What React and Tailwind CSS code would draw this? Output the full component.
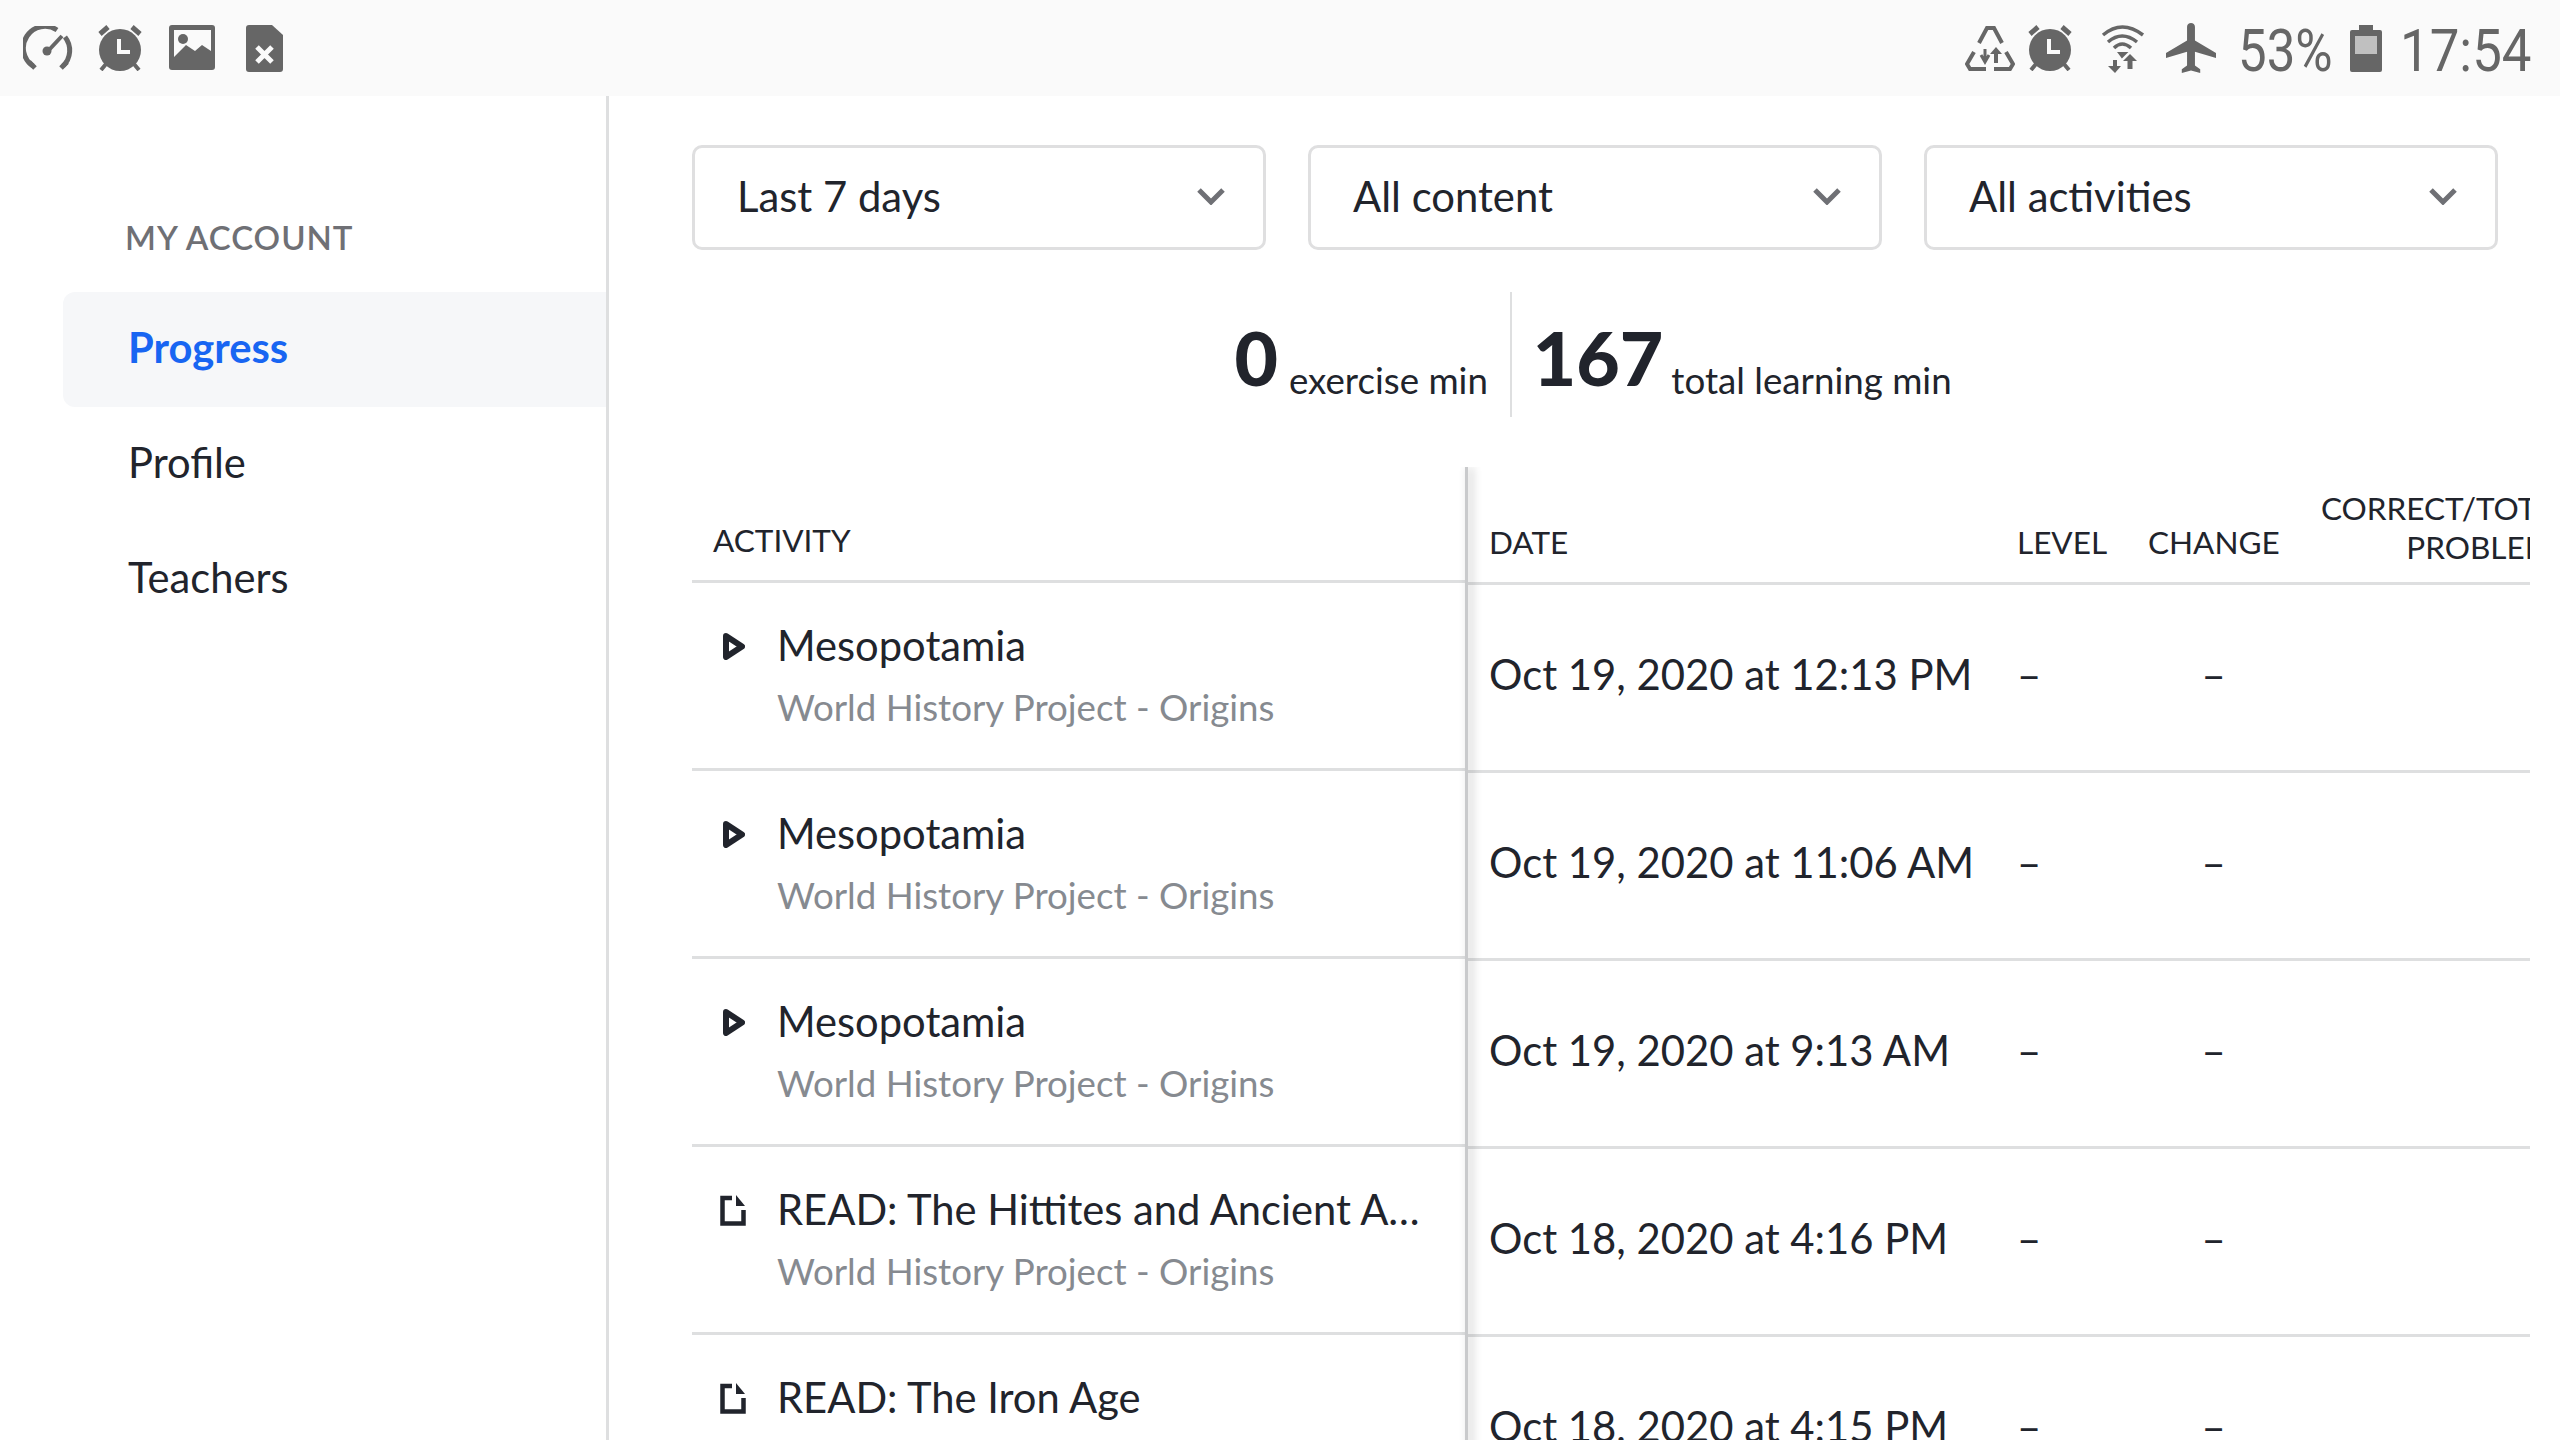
import React from "react";

const rows = [
  { type: "video", title: "Mesopotamia", date: "Oct 19, 2020 at 12:13 PM" },
  { type: "video", title: "Mesopotamia", date: "Oct 19, 2020 at 11:06 AM" },
  { type: "video", title: "Mesopotamia", date: "Oct 19, 2020 at 9:13 AM" },
  { type: "article", title: "READ: The Hittites and Ancient Anatolia", date: "Oct 18, 2020 at 4:16 PM" },
  { type: "article", title: "READ: The Iron Age", date: "Oct 18, 2020 at 4:15 PM" },
];

function SpeedIcon() {
  return (
    <svg width="50" height="44" viewBox="0 0 50 44" fill="none" stroke="#666" strokeWidth="5">
      <path d="M10 40 A21.5 21.5 0 0 1 34 4" />
      <path d="M42 11 A21.5 21.5 0 0 1 40 40" />
      <path d="M6 36 L12 42 M44 36 L38 42" />
      <path d="M25 25 L39 10" strokeWidth="4" />
      <circle cx="24" cy="25" r="4.5" fill="#666" stroke="none" />
    </svg>
  );
}

function AlarmIcon() {
  return (
    <svg width="46" height="46" viewBox="0 0 46 46" fill="none">
      <circle cx="23" cy="25" r="21" fill="#666" />
      <path d="M3 9 L11 2 M43 9 L35 2" stroke="#666" strokeWidth="5" />
      <path d="M9 39 L4 45 M37 39 L42 45" stroke="#666" strokeWidth="4" />
      <path d="M22 14 V27 H33" stroke="#fafafa" strokeWidth="4" />
    </svg>
  );
}

function ImageIcon() {
  return (
    <svg width="46" height="46" viewBox="0 0 46 46">
      <rect width="46" height="45" rx="3" fill="#666" />
      <path d="M5 5 H42 V26 L33 20 L26 26 L17 20 L5 32 Z" fill="#fafafa" />
      <circle cx="14" cy="14" r="5" fill="#666" />
    </svg>
  );
}

function FileXIcon() {
  return (
    <svg width="37" height="47" viewBox="0 0 37 47">
      <path d="M3 0 H26 L37 10 V44 Q37 47 34 47 H3 Q0 47 0 44 V3 Q0 0 3 0 Z" fill="#666" />
      <path d="M11 22 L26 37 M26 22 L11 37" stroke="#fafafa" strokeWidth="5" />
    </svg>
  );
}

function RecycleIcon() {
  return (
    <svg width="50" height="46" viewBox="0 0 50 46" fill="none" stroke="#666" strokeWidth="4">
      <path d="M14 18 L22 3 H29 L37 18" />
      <path d="M9 27 L2 39 L5 44 H21" />
      <path d="M41 27 L48 39 L45 44 H29" />
      <path d="M20 24 V36 M16 30 L20 37 L24 30" strokeWidth="3" />
      <path d="M31 38 V26" strokeWidth="4" />
      <path d="M25 29 L31 22 L37 29 Z" fill="#666" stroke="none" />
    </svg>
  );
}

function WifiIcon() {
  return (
    <svg width="44" height="50" viewBox="0 0 44 50" fill="none" stroke="#666" strokeWidth="3.5">
      <path d="M2 12 Q21 -4 42 12" />
      <path d="M7 19 Q21 7 36 19" />
      <path d="M13 25 Q21 17 30 25" />
      <path d="M18 30 L21 34 L25 30 Z" fill="#666" strokeWidth="2" />
      <path d="M14 37 V47" strokeWidth="4" />
      <path d="M7 43 L14 50 L20 43 Z" fill="#666" stroke="none" />
      <path d="M29 46 V36" strokeWidth="5" />
      <path d="M22 38 L29 31 L36 38 Z" fill="#666" stroke="none" />
    </svg>
  );
}

function PlaneIcon() {
  return (
    <svg width="50" height="50" viewBox="2 2 19 20" preserveAspectRatio="none" fill="#666">
      <path d="M21 16v-2l-8-5V3.5c0-.83-.67-1.5-1.5-1.5S10 2.67 10 3.5V9l-8 5v2l8-2.5V19l-2 1.5V22l3.5-1 3.5 1v-1.5L13 19v-5.5l8 2.5z" />
    </svg>
  );
}

function BatteryIcon() {
  return (
    <svg width="32" height="47" viewBox="0 0 32 47">
      <path d="M9 0 H23 V5 H30 Q32 5 32 7 V45 Q32 47 30 47 H2 Q0 47 0 45 V7 Q0 5 2 5 H9 Z" fill="#666" />
      <rect x="5" y="11" width="22" height="18" fill="#c0c0c0" />
    </svg>
  );
}

function PlayIcon() {
  return (
    <svg width="22" height="27" viewBox="0 0 22 27" fill="none" stroke="#21242c" strokeWidth="6" strokeLinejoin="round">
      <path d="M3 3 L19 13.5 L3 24 Z" />
    </svg>
  );
}

function ArticleIcon() {
  return (
    <svg className="-ml-[3px] -mt-[2px]" width="26" height="31" viewBox="0 0 26 31" fill="none">
      <path d="M12 3 H2.5 V28.5 H23.5 V15" stroke="#21242c" strokeWidth="4.5" />
      <path d="M16 0 L25 11 H16 Z" fill="#21242c" />
    </svg>
  );
}

function Chevron() {
  return (
    <svg width="28" height="17" viewBox="0 0 28 17" fill="none" stroke="#6f7075" strokeWidth="5">
      <path d="M2 2 L14 14 L26 2" />
    </svg>
  );
}

function Select({ label }) {
  return (
    <div className="flex items-center justify-between w-[574px] h-[105px] pl-[42px] pr-[38px] pb-[2px] border-[3px] border-[#dfdfe0] rounded-[10px] text-[41.8px] text-[#21242c]">
      <span>{label}</span>
      <Chevron />
    </div>
  );
}

export default function App() {
  return (
    <div className="h-[1440px] w-[2560px] overflow-hidden bg-white font-['Lato','Noto_Sans',sans-serif] text-[#21242c]">
      <div className="flex items-center justify-between h-[96px] bg-[#fafafa] pl-[23px] pr-[30px]">
        <div className="flex items-center">
          <div className="mr-[24px]"><SpeedIcon /></div>
          <div className="mr-[26px]"><AlarmIcon /></div>
          <div className="mr-[31px]"><ImageIcon /></div>
          <FileXIcon />
        </div>
        <div className="flex items-center">
          <div className="mr-[12px]"><RecycleIcon /></div>
          <div className="mr-[28px]"><AlarmIcon /></div>
          <div className="mr-[21px]"><WifiIcon /></div>
          <div className="mr-[22px]"><PlaneIcon /></div>
          <span className="w-[94px] mr-[18px] pt-[6px] origin-left scale-x-[0.85] font-['Roboto',sans-serif] text-[60px] leading-none text-[#666] whitespace-nowrap">53%</span>
          <div className="mr-[18px]"><BatteryIcon /></div>
          <span className="w-[130px] pt-[6px] origin-left scale-x-[0.88] font-['Roboto',sans-serif] text-[60px] leading-none text-[#666] whitespace-nowrap">17:54</span>
        </div>
      </div>

      <div className="flex">
        <aside className="w-[609px] h-[1344px] shrink-0 border-r-[3px] border-[#dedfe0] pl-[63px] pt-[116px]">
          <div className="pl-[62px] text-[33px] font-semibold leading-[50px] tracking-[1px] text-[#6f7075]">MY ACCOUNT</div>
          <div className="mt-[30px] flex items-center h-[115px] pl-[65px] pb-[5px] rounded-l-[12px] bg-[#f6f7f9] text-[41.7px] font-bold text-[#1865f2]">Progress</div>
          <div className="flex items-center h-[115px] pl-[65px] pb-[5px] text-[41.7px]">Profile</div>
          <div className="flex items-center h-[115px] pl-[65px] pb-[5px] text-[41.7px]">Teachers</div>
        </aside>

        <main className="w-[1921px] pl-[83px] pt-[49px]">
          <div className="flex gap-[42px]">
            <Select label="Last 7 days" />
            <Select label="All content" />
            <Select label="All activities" />
          </div>

          <div className="flex justify-center items-end h-[125px] mt-[42px] pr-[36px]">
            <div className="flex items-end pr-[22px] pb-[12px]">
              <span className="text-[75px] font-black mr-[11px] mb-[10px] leading-[75px]">0</span>
              <span className="text-[36.7px] leading-[50px]">exercise min</span>
            </div>
            <div className="w-[2px] h-[125px] bg-[#dedfe0]" />
            <div className="flex items-end pl-[21px] pb-[12px]">
              <span className="text-[75px] font-black mr-[8px] mb-[10px] leading-[75px]">167</span>
              <span className="text-[36.7px] leading-[50px]">total learning min</span>
            </div>
          </div>

          <div className="flex mt-[50px] w-[1838px] overflow-hidden">
            <div className="w-[773px] shrink-0">
              <div className="flex items-end h-[116px] pl-[21px] pb-[20px] border-b-[3px] border-[#dedfe0] text-[31.5px] leading-[40px]">ACTIVITY</div>
              {rows.map((row, i) => (
                <div key={i} className="flex h-[188px] border-b-[3px] border-[#dedfe0] pl-[31px] pt-[37px]">
                  <div className="w-[54px] shrink-0 pt-[13px]">
                    {row.type === "video" ? <PlayIcon /> : <ArticleIcon />}
                  </div>
                  <div className="min-w-0 w-[654px]">
                    <div className="truncate text-[41.7px] leading-[50px]">{row.title}</div>
                    <div className="text-[36.7px] leading-[50px] mt-[12px] text-[#868a90]">World History Project - Origins</div>
                  </div>
                </div>
              ))}
            </div>

            <div className="relative flex-1 min-w-0 pl-[3px] pt-[2px]">
              <div className="absolute left-0 top-0 bottom-0 w-[3px] bg-[#c9cacc] shadow-[4px_0_10px_rgba(0,0,0,0.3)]" />
              <div className="flex items-end h-[116px] pb-[15px] border-b-[3px] border-[#dedfe0] text-[31.5px] leading-[39px]">
                <div className="w-[549px] shrink-0 pl-[21px] pb-[5px]">DATE</div>
                <div className="w-[131px] shrink-0 pb-[5px]">LEVEL</div>
                <div className="w-[173px] shrink-0 pb-[5px]">CHANGE</div>
                <div className="w-[250px] shrink-0 text-right whitespace-nowrap">
                  <div>CORRECT/TOTAL</div>
                  <div>PROBLEMS</div>
                </div>
              </div>
              {rows.map((row, i) => (
                <div key={i} className="flex items-center h-[188px] pb-[6px] border-b-[3px] border-[#dedfe0] text-[41.8px]">
                  <div className="w-[549px] shrink-0 pl-[21px] whitespace-nowrap">{row.date}</div>
                  <div className="w-[131px] shrink-0">–</div>
                  <div className="w-[131px] shrink-0 text-center">–</div>
                </div>
              ))}
            </div>
          </div>
        </main>
      </div>
    </div>
  );
}
